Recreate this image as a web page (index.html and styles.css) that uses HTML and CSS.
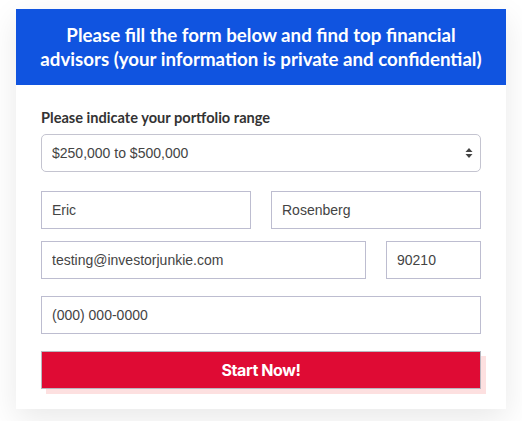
FILE: index.html
```html
<!DOCTYPE html>
<html lang="en">
<head>
    <meta charset="UTF-8">
    <meta name="viewport" content="width=device-width, initial-scale=1.0">
    <title>Find Financial Advisors</title>
    <link rel="stylesheet" href="styles.css">
</head>
<body>
    <div class="card">
        <div class="card-header">
            Please fill the form below and find top financial advisors (your information is private and confidential)
        </div>
        <form class="card-body" id="advisorForm">
            <label for="range" class="field-label">Please indicate your portfolio range</label>
            <div class="select-wrap">
                <select id="range">
                    <option>$250,000 to $500,000</option>
                    <option>$500,000 to $1,000,000</option>
                    <option>Over $1,000,000</option>
                </select>
                <span class="arrows">
                    <svg width="8" height="12" viewBox="0 0 8 12"><path d="M4 1 L7.5 5 H0.5 Z M4 11 L7.5 7 H0.5 Z" fill="#444"/></svg>
                </span>
            </div>

            <div class="row">
                <input type="text" class="grow" value="Eric">
                <input type="text" class="grow" value="Rosenberg">
            </div>

            <div class="row spaced">
                <input type="email" class="grow" value="testing@investorjunkie.com">
                <input type="text" class="zip" value="90210">
            </div>

            <div class="row spaced">
                <input type="tel" class="grow" placeholder="(000) 000-0000">
            </div>

            <button type="submit">Start Now!</button>
        </form>
    </div>
</body>
</html>
```

FILE: styles.css
```css
body {
    margin: 0;
    padding: 9px 16px 12px;
    background-color: #fff;
    font-family: "Liberation Sans", Arial, sans-serif;
}
.card {
    background-color: #fff;
    box-shadow: 0 10px 30px rgba(0,0,0,0.09);
}
.card-header {
    background-color: #1054e0;
    color: #fff;
    font-family: Lato, sans-serif;
    font-weight: 700;
    font-size: 18.7px;
    line-height: 24px;
    text-align: center;
    padding: 14px 20px;
}
.card-body {
    padding: 24px 25px 20px;
    display: flex;
    flex-direction: column;
}
.field-label {
    font-family: Lato, sans-serif;
    font-weight: 700;
    font-size: 14.6px;
    color: #333;
    margin-bottom: 8px;
}
.select-wrap {
    position: relative;
    margin-bottom: 19px;
}
select {
    width: 100%;
    height: 38px;
    appearance: none;
    background: #fff;
    border: 1px solid #c4c4d0;
    border-radius: 5px;
    padding: 0 10px;
    font-family: "Liberation Sans", Arial, sans-serif;
    font-size: 14px;
    color: #444;
}
.arrows {
    position: absolute;
    right: 8px;
    top: 13px;
    pointer-events: none;
    line-height: 0;
}
.row {
    display: flex;
    gap: 20px;
    margin-bottom: 12px;
}
.row.spaced {
    margin-bottom: 17px;
}
input {
    box-sizing: border-box;
    height: 38px;
    border: 1px solid #bdbdd0;
    border-radius: 0;
    padding: 0 10px;
    font-family: "Liberation Sans", Arial, sans-serif;
    font-size: 14px;
    color: #444;
    min-width: 0;
}
input::placeholder {
    color: #444;
}
.grow {
    flex: 1;
}
.zip {
    width: 95px;
}
button {
    height: 38px;
    background-color: #df0b34;
    color: #fff;
    border: 1px solid #b8b8c0;
    font-family: Inter, sans-serif;
    font-weight: 700;
    font-size: 16px;
    letter-spacing: -0.4px;
    box-shadow: 5px 5px 0 #fde0e0;
    cursor: pointer;
}
```
